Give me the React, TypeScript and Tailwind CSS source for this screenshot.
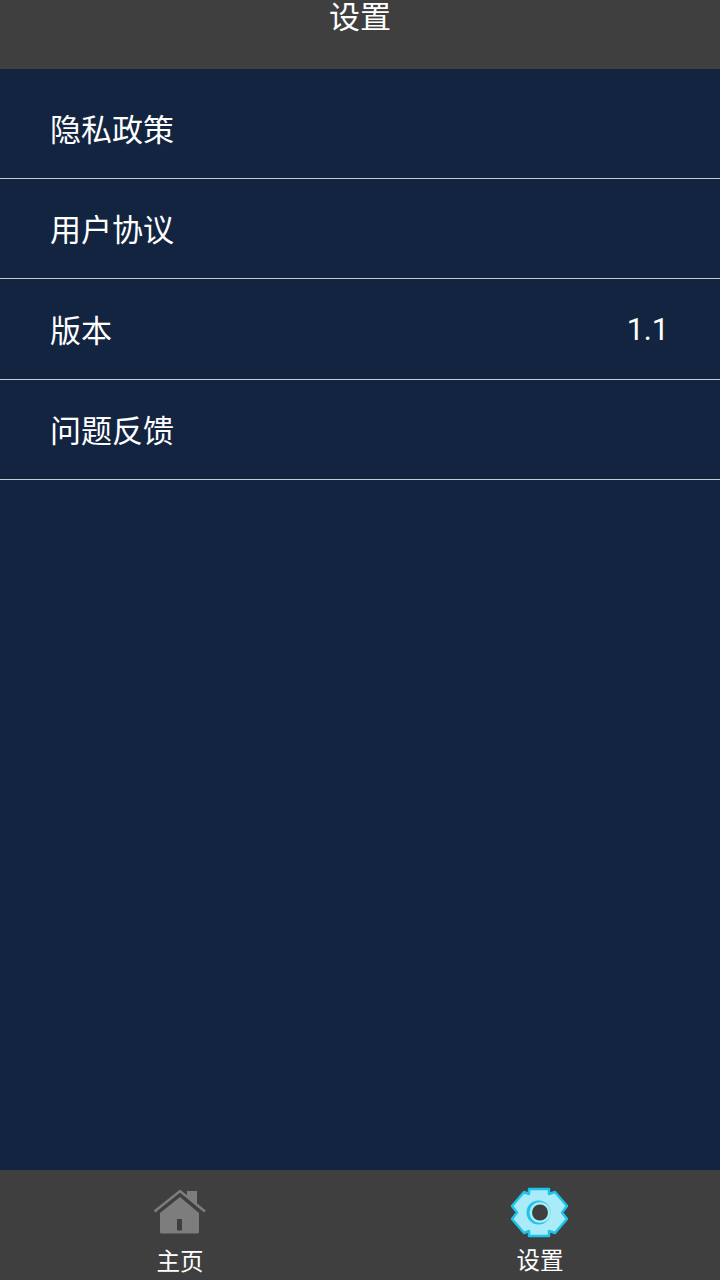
export default function App() {
  const font = "[font-family:'Noto_Sans_CJK_SC','Roboto',sans-serif]";
  const rows: [string, string?][] = [["隐私政策"], ["用户协议"], ["版本", "1.1"], ["问题反馈"]];
  return (
    <div className={`w-[720px] h-[1280px] flex flex-col bg-[#132440] text-white ${font}`}>
      <div className="h-[69px] bg-[#3f3f3f] flex justify-center items-start">
        <span className="text-[31px] leading-[30px]">设置</span>
      </div>
      <div className="flex-1 flex flex-col">
        {rows.map(([label, val], i) => (
          <div key={label} className={`${i === 0 ? "h-[110px] pt-[9px]" : "h-[100.3px]"} border-b border-b-[#c5ccd4] flex items-center justify-between pl-[50px] pr-[51px] text-[31px]`}>
            <span>{label}</span>
            {val && <span className="[font-family:'Roboto',sans-serif] text-[30.5px] pt-[2px]">{val}</span>}
          </div>
        ))}
      </div>
      <div className="h-[110px] bg-[#3f3f3f] flex">
        <div className="w-1/2 flex flex-col items-center pt-[18px]">
          <svg width="54" height="46" viewBox="0 0 54 46" className="block">
            <path d="M34 3h10v14l-10-8z" fill="#7d7d7d" />
            <path d="M7 25 L27 9 L46 25 V44a1.500 1.500 0 0 1-1.500 1.500H8.500A1.500 1.500 0 0 1 7 44z" fill="#7d7d7d" />
            <path d="M1.500 23.500 L27 3 L52 23.500" fill="none" stroke="#7d7d7d" strokeWidth="2.500" />
            <rect x="24" y="31" width="5" height="11.500" fill="#3f3f3f" />
          </svg>
          <span className="text-[23.5px] leading-[30px] mt-[11px]">主页</span>
        </div>
        <div className="w-1/2 flex flex-col items-center pt-[16px]">
          <svg width="60" height="54" viewBox="0 0 60 54" className="block">
            <path d="M19 3H39V8L45 6 57 20 52 26.500 57 33 45 47 39 45V50H19V45L14 47 2 33 7 26.500 2 20 14 6 19 8Z" fill="#a9ebf8" stroke="#1cc4e8" strokeWidth="2.500" strokeLinejoin="round" />
            <circle cx="28.500" cy="26.500" r="12" fill="#1cc4e8" />
            <circle cx="30" cy="26.500" r="10.500" fill="#a9ebf8" />
            <circle cx="30" cy="26.500" r="8" fill="#3f3f3f" />
          </svg>
          <span className="text-[23.5px] leading-[30px] mt-[4px]">设置</span>
        </div>
      </div>
    </div>
  );
}
